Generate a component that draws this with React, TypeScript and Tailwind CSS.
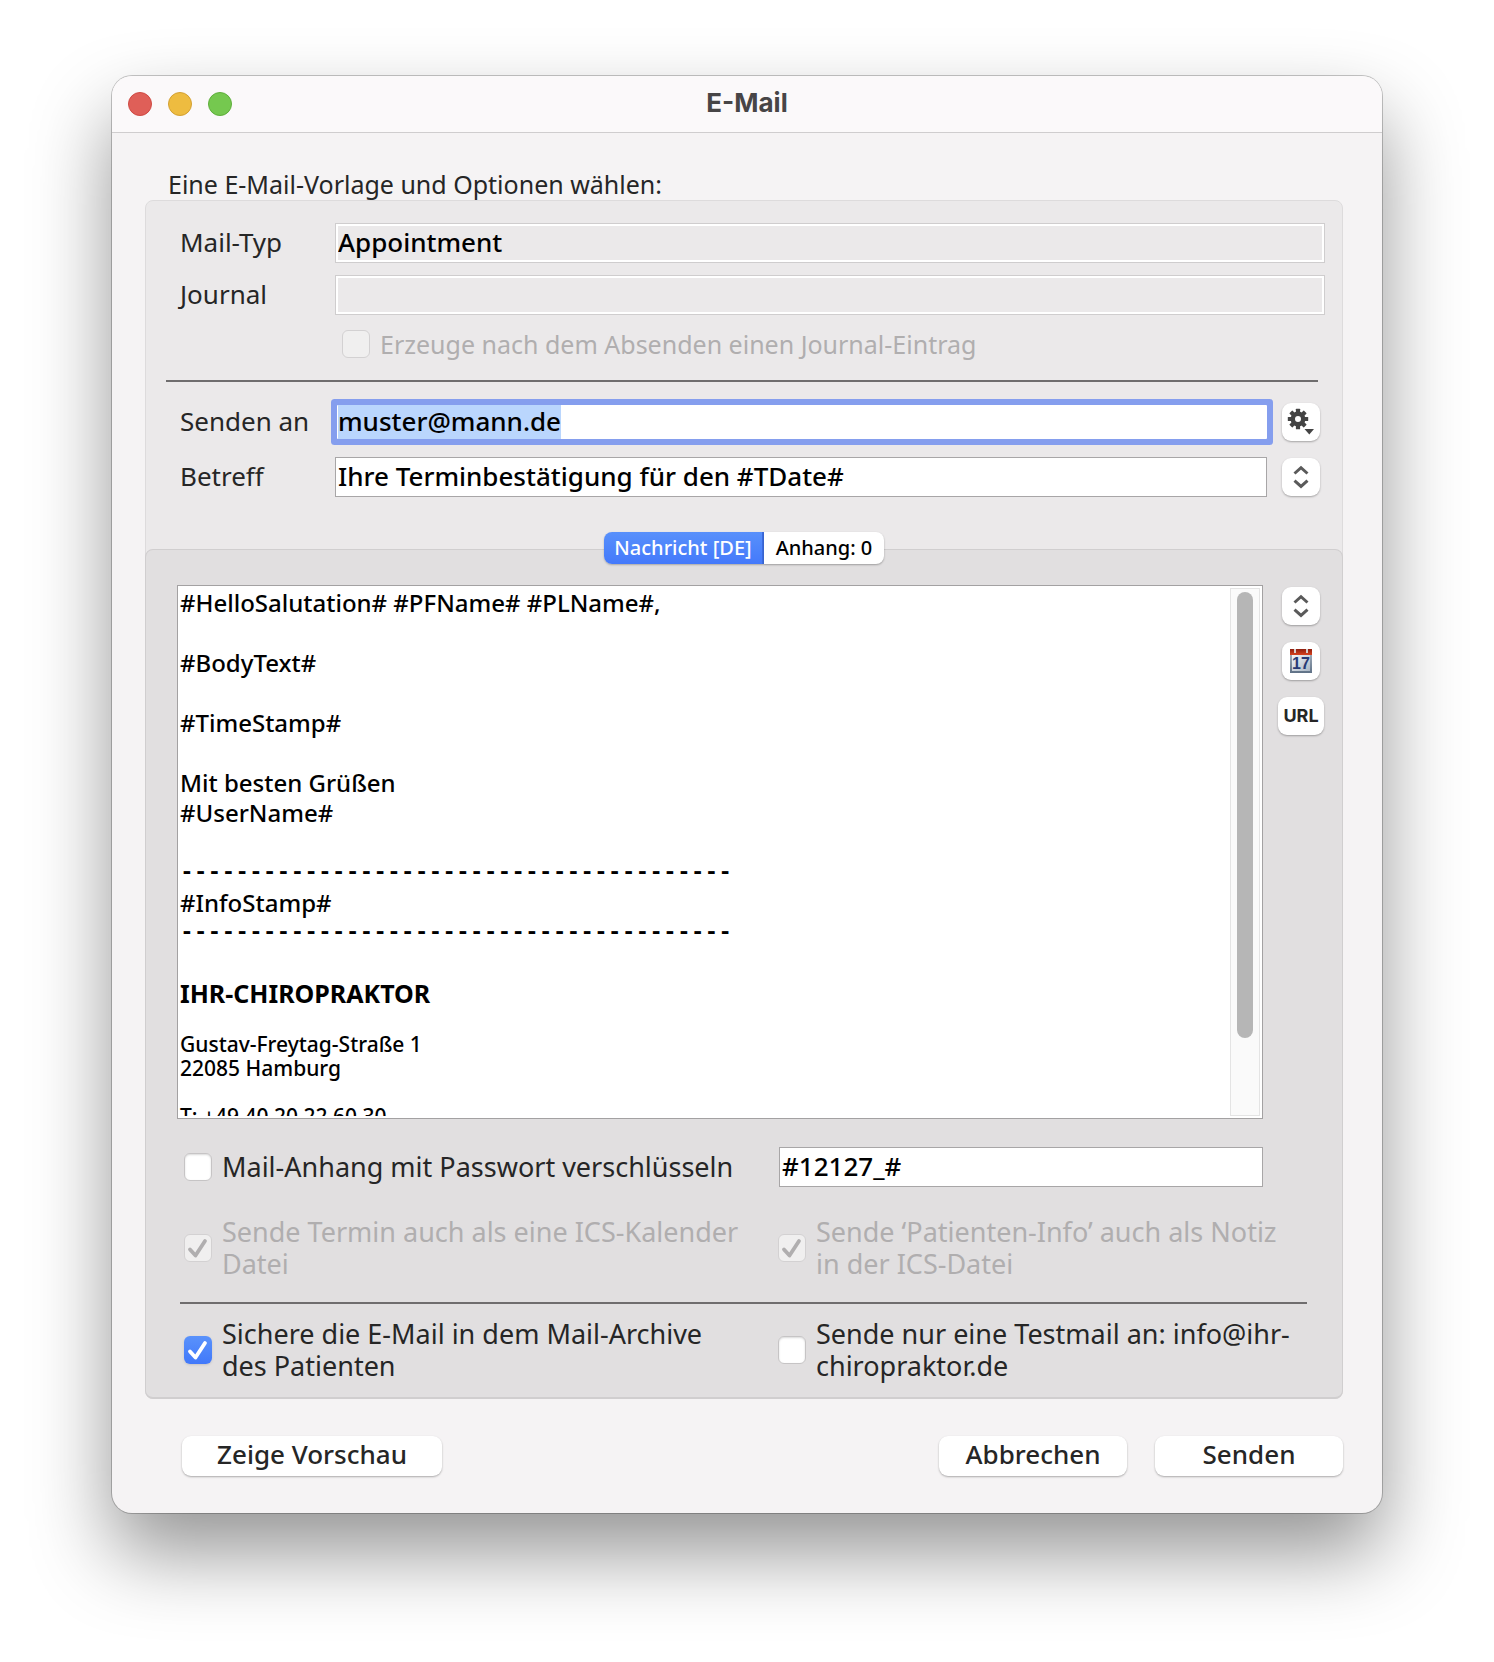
import React, { useEffect, useRef } from 'react';
import clsx from 'clsx';

function CheckMark({ className }: { className?: string }) {
  return (
    <svg viewBox="0 0 28 28" className={clsx('pointer-events-none absolute inset-0 size-7', className)} fill="none">
      <path d="M6 15.5 L11.5 21.5 L21 7" stroke="currentColor" strokeWidth="3.8" strokeLinecap="round" strokeLinejoin="round" />
    </svg>
  );
}

type CheckProps = {
  id: string;
  label: string;
  checked?: boolean;
  disabled?: boolean;
  small?: boolean;
};

function Check({ id, label, checked = false, disabled = false, small = false }: CheckProps) {
  return (
    <div className="flex items-center gap-[10px]">
      <span className="relative size-7 shrink-0">
        <input
          id={id}
          type="checkbox"
          defaultChecked={checked}
          disabled={disabled}
          className={clsx(
            'block size-7 appearance-none rounded-md border',
            disabled && 'border-[#d3d1d2] bg-[#f0efef]',
            !disabled && !checked && 'border-[#c6c4c5] bg-white shadow-[inset_0_1px_2px_rgba(0,0,0,0.15)]',
            !disabled && checked && 'border-transparent bg-linear-to-b from-[#5a92fb] to-[#4178fa] bg-origin-border shadow-sm',
          )}
        />
        {checked && <CheckMark className={disabled ? 'text-[#b0aeaf]' : 'text-white'} />}
      </span>
      <label
        htmlFor={id}
        className={clsx(
          small ? 'text-[25px] leading-7' : 'text-[27px] leading-8',
          disabled ? 'text-[#b0aeaf]' : 'text-[#262626]',
        )}
      >
        {label}
      </label>
    </div>
  );
}

function IconButton({ label, wide, children }: { label: string; wide?: boolean; children: React.ReactNode }) {
  return (
    <button
      type="button"
      aria-label={label}
      className={clsx(
        'flex h-[38px] shrink-0 items-center justify-center rounded-[9px] bg-white shadow-[0_1px_2px_rgba(0,0,0,0.3)]',
        wide ? 'w-[46px]' : 'w-[38px]',
      )}
    >
      {children}
    </button>
  );
}

function GearIcon() {
  return (
    <svg viewBox="0 0 38 38" className="size-[38px]" fill="#444444">
      <circle cx="16" cy="16" r="5.2" fill="none" stroke="#444444" strokeWidth="4.4" />
      {[0, 45, 90, 135, 180, 225, 270, 315].map((angle) => (
        <rect key={angle} x="13.9" y="5.8" width="4.2" height="4.6" rx="0.5" transform={`rotate(${angle} 16 16)`} />
      ))}
      <path d="M22.5 26 h9.5 l-4.7 5.4 z" />
    </svg>
  );
}

function UpDownIcon() {
  return (
    <svg viewBox="0 0 38 38" className="size-[38px]" fill="none" stroke="#5a5a5a" strokeWidth="3">
      <path d="M12.5 15.5 L19 9.7 L25.5 15.5" />
      <path d="M12.5 22.6 L19 28.4 L25.5 22.6" />
    </svg>
  );
}

function CalendarIcon() {
  return (
    <svg viewBox="0 0 22 24" className="h-6 w-[22px]">
      <defs>
        <linearGradient id="cal-body" x1="0" y1="0" x2="0" y2="1">
          <stop offset="0" stopColor="#b3bdc9" />
          <stop offset="1" stopColor="#5f7186" />
        </linearGradient>
        <linearGradient id="cal-page" x1="0" y1="0" x2="1" y2="1">
          <stop offset="0" stopColor="#f4f6f8" />
          <stop offset="1" stopColor="#a9b6c4" />
        </linearGradient>
        <linearGradient id="cal-top" x1="0" y1="0" x2="0" y2="1">
          <stop offset="0" stopColor="#8e1f10" />
          <stop offset="1" stopColor="#d9431f" />
        </linearGradient>
      </defs>
      <rect width="22" height="24" fill="url(#cal-body)" />
      <rect x="2" y="6" width="18" height="16" fill="url(#cal-page)" />
      <rect width="22" height="6" fill="url(#cal-top)" />
      <rect x="4" width="2" height="4" fill="#d6d0ce" />
      <rect x="16" width="2" height="4" fill="#d6d0ce" />
      <text x="11" y="20" textAnchor="middle" fontFamily="Liberation Sans" fontWeight="700" fontSize="16" fill="#273a75">
        17
      </text>
    </svg>
  );
}

const fieldText = 'pb-[2px] text-[26px] font-medium text-black outline-none';
const rowLabel = 'w-[155px] shrink-0 pb-[2px] text-[26px] leading-9 text-[#262626]';
const pushButton =
  'h-10 rounded-[9px] bg-white pb-1 text-[26px] leading-none font-medium text-[#262626] shadow-[0_1px_2px_rgba(0,0,0,0.3)]';

export default function App() {
  const recipientRef = useRef<HTMLInputElement>(null);

  useEffect(() => {
    recipientRef.current?.focus();
    recipientRef.current?.select();
  }, []);

  return (
    <div className="min-h-screen bg-white px-28 pt-19 pb-37 font-['Noto_Sans','Open_Sans',sans-serif]">
      <main className="overflow-hidden rounded-[20px] bg-[#f5f3f4] shadow-[0_0_0_1px_rgba(0,0,0,0.22),0_40px_80px_rgba(0,0,0,0.42)]">
        <header className="flex h-[57px] items-center border-b border-[#cfcdce] bg-[#fbf9fa] px-4">
          <div className="flex flex-1 gap-4">
            <button type="button" aria-label="Schließen" className="size-6 rounded-full border border-[#cf4a43] bg-[#df5f58]" />
            <button type="button" aria-label="Minimieren" className="size-6 rounded-full border border-[#d3a032] bg-[#eebc40]" />
            <button type="button" aria-label="Vergrößern" className="size-6 rounded-full border border-[#5eae3b] bg-[#75c84f]" />
          </div>
          <h1 className="pb-[2px] font-['Inter',sans-serif] text-[26px] leading-none font-bold text-[#474546]">E-Mail</h1>
          <div className="flex-1" />
        </header>

        <form className="pr-[39px] pb-[37px] pl-[33px]" onSubmit={(e) => e.preventDefault()}>
          <p className="pt-9 pl-[23px] text-[25px] leading-[31px] text-[#262626]">Eine E-Mail-Vorlage und Optionen wählen:</p>

          <section className="rounded-lg border border-[#dddbdc] bg-[#ebe9ea] pt-[22px]">
            <div className="pr-[17px] pl-[34px]">
              <div className="flex items-center">
                <label htmlFor="type" className={rowLabel}>Mail-Typ</label>
                <input
                  id="type"
                  readOnly
                  defaultValue="Appointment"
                  className={clsx(fieldText, 'h-10 min-w-0 flex-1 border border-[#cfcdce] bg-[#ebe9ea] px-[2px] shadow-[inset_0_0_0_2px_white]')}
                />
              </div>
              <div className="mt-3 flex items-center">
                <label htmlFor="journal" className={rowLabel}>Journal</label>
                <input
                  id="journal"
                  readOnly
                  className={clsx(fieldText, 'h-10 min-w-0 flex-1 border border-[#cfcdce] bg-[#ebe9ea] px-[2px] shadow-[inset_0_0_0_2px_white]')}
                />
              </div>
              <div className="mt-[15px] pl-[162px]">
                <Check id="journal-entry" label="Erzeuge nach dem Absenden einen Journal-Eintrag" disabled small />
              </div>
              <hr className="mt-[22px] mr-[7px] -ml-[14px] h-[2px] border-0 bg-[#6f6d6e]" />
              <div className="mt-5 flex h-10 items-center pr-[5px]">
                <label htmlFor="to" className={rowLabel}>Senden an</label>
                <input
                  id="to"
                  ref={recipientRef}
                  defaultValue="muster@mann.de"
                  className={clsx(fieldText, 'mx-[2px] h-[34px] min-w-0 flex-1 rounded-[1px] bg-white px-px shadow-[0_0_0_6px_#859eee] selection:bg-[#bad6fd] selection:text-black')}
                />
                <span className="ml-[13px] flex">
                  <IconButton label="Empfänger-Optionen"><GearIcon /></IconButton>
                </span>
              </div>
              <div className="mt-[15px] flex items-center pr-[5px]">
                <label htmlFor="subject" className={rowLabel}>Betreff</label>
                <input
                  id="subject"
                  defaultValue="Ihre Terminbestätigung für den #TDate#"
                  className={clsx(fieldText, 'h-10 min-w-0 flex-1 border border-[#a8a6a7] bg-white px-[2px]')}
                />
                <span className="ml-[15px] flex">
                  <IconButton label="Betreff wählen"><UpDownIcon /></IconButton>
                </span>
              </div>
            </div>

            <div role="tablist" className="relative z-10 mt-[35px] flex justify-center text-xl leading-8">
              <button
                type="button"
                role="tab"
                aria-selected="true"
                className="h-8 w-40 rounded-l-lg border-r-2 border-[#3d6de0] bg-linear-to-b from-[#5890fb] to-[#4479fb] font-medium text-white shadow-[0_1px_2px_rgba(0,0,0,0.25)]"
              >
                Nachricht [DE]
              </button>
              <button
                type="button"
                role="tab"
                aria-selected="false"
                className="h-8 w-[120px] rounded-r-lg bg-white font-medium text-black shadow-[0_1px_2px_rgba(0,0,0,0.3)]"
              >
                Anhang: 0
              </button>
            </div>

            <div className="-mx-px -mt-[15px] -mb-px rounded-lg border border-b-2 border-[#d0cecf] bg-[#e1dfe0] pt-[35px] pr-[18px] pb-[15px] pl-[31px]">
              <div className="flex items-start">
                <div className="flex h-[534px] min-w-0 flex-1 overflow-hidden border border-[#a3a1a2] bg-white">
                  <div
                    role="textbox"
                    aria-multiline="true"
                    aria-label="Nachricht"
                    contentEditable
                    suppressContentEditableWarning
                    className="mb-[2px] min-w-0 flex-1 overflow-hidden pt-[2px] pl-[2px] text-2xl leading-[30px] font-medium whitespace-pre-wrap text-black outline-none"
                  >
                    <p>#HelloSalutation# #PFName# #PLName#,</p>
                    <br />
                    <p>#BodyText#</p>
                    <br />
                    <p>#TimeStamp#</p>
                    <br />
                    <p>Mit besten Grüßen</p>
                    <p>#UserName#</p>
                    <br />
                    <p className="font-['Liberation_Mono',monospace] text-[23px] font-bold">----------------------------------------</p>
                    <p>#InfoStamp#</p>
                    <p className="font-['Liberation_Mono',monospace] text-[23px] font-bold">----------------------------------------</p>
                    <br />
                    <p className="text-[25px] font-bold">IHR-CHIROPRAKTOR</p>
                    <div className="text-[21px] leading-6">
                      <br />
                      <p>Gustav-Freytag-Straße 1</p>
                      <p>22085 Hamburg</p>
                      <br />
                      <p>T: +49 40 20 22 60 30</p>
                    </div>
                  </div>
                  <div className="my-[2px] mr-[2px] w-[30px] shrink-0 border border-[#e4e4e4] bg-[#fafafa] px-[6px] pt-[3px]">
                    <div className="h-[446px] rounded-full bg-[#b6b6b6]" />
                  </div>
                </div>
                <div className="ml-[15px] flex flex-col items-center gap-[17px] pt-[2px]">
                  <IconButton label="Vorlage wählen"><UpDownIcon /></IconButton>
                  <IconButton label="Termin einfügen"><CalendarIcon /></IconButton>
                  <IconButton label="URL einfügen" wide>
                    <span className="font-['Inter',sans-serif] text-lg font-bold text-[#262626]">URL</span>
                  </IconButton>
                </div>
              </div>

              <div className="mt-7 flex pr-[61px] pl-[7px]">
                <div className="flex w-[595px] shrink-0 items-center">
                  <Check id="encrypt" label="Mail-Anhang mit Passwort verschlüsseln" />
                </div>
                <input
                  aria-label="Passwort"
                  defaultValue="#12127_#"
                  className={clsx(fieldText, 'h-10 min-w-0 flex-1 border border-[#a8a6a7] bg-white px-[2px]')}
                />
              </div>
              <div className="mt-[29px] flex pr-7 pl-[7px]">
                <div className="w-[594px] shrink-0 pr-8">
                  <Check id="ics" label="Sende Termin auch als eine ICS-Kalender Datei" checked disabled />
                </div>
                <Check id="ics-note" label="Sende ‘Patienten-Info’ auch als Notiz in der ICS-Datei" checked disabled />
              </div>
              <hr className="mt-[22px] mr-[17px] ml-[3px] h-[2px] border-0 bg-[#6f6d6e]" />
              <div className="mt-[14px] flex pr-7 pl-[7px]">
                <div className="w-[594px] shrink-0 pr-8">
                  <Check id="archive" label="Sichere die E-Mail in dem Mail-Archive des Patienten" checked />
                </div>
                <Check id="testmail" label="Sende nur eine Testmail an: info@ihr-chiropraktor.de" />
              </div>
            </div>
          </section>

          <footer className="mt-[37px] flex gap-7 pl-[37px]">
            <button type="button" className={clsx(pushButton, 'mr-auto w-[260px]')}>Zeige Vorschau</button>
            <button type="button" className={clsx(pushButton, 'w-[188px]')}>Abbrechen</button>
            <button type="submit" className={clsx(pushButton, 'w-[188px]')}>Senden</button>
          </footer>
        </form>
      </main>
    </div>
  );
}
